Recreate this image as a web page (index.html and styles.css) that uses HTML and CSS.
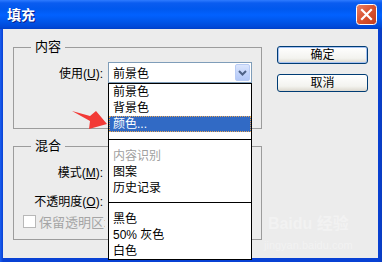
FILE: index.html
```html
<!DOCTYPE html>
<html lang="zh-CN">
<head>
    <meta charset="UTF-8">
    <title>填充</title>
    <link rel="stylesheet" href="styles.css">
</head>
<body>
    <div class="window">
        <header class="titlebar">
            <span class="title">填充</span>
            <button class="close-button" aria-label="关闭">
                <svg viewBox="0 0 21 21" width="21" height="21">
                    <defs>
                        <linearGradient id="closeFill" x1="0" y1="0" x2="1" y2="1">
                            <stop offset="0" stop-color="#E9836A"/>
                            <stop offset="0.5" stop-color="#D9522F"/>
                            <stop offset="1" stop-color="#C23C1C"/>
                        </linearGradient>
                    </defs>
                    <rect x="0.5" y="0.5" width="20" height="20" rx="3" fill="url(#closeFill)" stroke="#FFFFFF"/>
                    <path d="M6 6 L15 15 M15 6 L6 15" stroke="#FFFFFF" stroke-width="2.2" stroke-linecap="square"/>
                </svg>
            </button>
        </header>

        <div class="client">
            <div class="groups">
                <fieldset class="group group-content">
                    <legend>内容</legend>
                    <div class="field-row">
                        <label class="field-label">使用(<u>U</u>):</label>
                        <div class="combo">
                            <span class="combo-value">前景色</span>
                            <span class="combo-button">
                                <svg viewBox="0 0 9 6" width="9" height="6">
                                    <path d="M1 1 L4.5 4.5 L8 1" fill="none" stroke="#4D6185" stroke-width="2"/>
                                </svg>
                            </span>
                            <ul class="combo-list">
                                <li class="combo-item">前景色</li>
                                <li class="combo-item">背景色</li>
                                <li class="combo-item selected">颜色...</li>
                                <li class="combo-sep sep-first"></li>
                                <li class="combo-item disabled">内容识别</li>
                                <li class="combo-item">图案</li>
                                <li class="combo-item">历史记录</li>
                                <li class="combo-sep sep-second"></li>
                                <li class="combo-item">黑色</li>
                                <li class="combo-item">50% 灰色</li>
                                <li class="combo-item">白色</li>
                            </ul>
                        </div>
                    </div>
                </fieldset>

                <fieldset class="group group-blend">
                    <legend>混合</legend>
                    <div class="field-row">
                        <label class="field-label">模式(<u>M</u>):</label>
                    </div>
                    <div class="field-row">
                        <label class="field-label">不透明度(<u>O</u>):</label>
                    </div>
                    <div class="check-row">
                        <span class="checkbox"></span>
                        <span class="check-label">保留透明区域</span>
                    </div>
                </fieldset>
            </div>

            <div class="buttons">
                <button class="dialog-button default">确定</button>
                <button class="dialog-button">取消</button>
            </div>
        </div>

        <svg class="pointer-arrow" viewBox="0 0 40 26" width="40" height="26">
            <polygon points="2,3 20,8 26,3 37,16 19,21 20,13" fill="#F23A36"/>
        </svg>

        <div class="watermark">
            <div class="watermark-logo">Baidu 经验</div>
            <div class="watermark-url">jingyan.baidu.com</div>
        </div>
    </div>
</body>
</html>
```

FILE: styles.css
```css
* {
    margin: 0;
    padding: 0;
    box-sizing: border-box;
}

body {
    width: 382px;
    height: 262px;
    overflow: hidden;
    font-family: "Liberation Sans", "Noto Sans CJK SC", sans-serif;
    font-size: 12px;
    color: #000000;
    background: #0841D4;
}

.window {
    position: relative;
    width: 382px;
    height: 262px;
    display: flex;
    flex-direction: column;
    background: linear-gradient(to right, #1B5EF0 0, #0841D4 3px, #0841D4 378px, #0A3CC0 382px);
}

.titlebar {
    height: 29px;
    display: flex;
    align-items: center;
    padding: 0 5px 0 7px;
    background: linear-gradient(to bottom, #2E7BFF 0, #0A5CF0 3px, #0058EE 9px, #0261FF 15px, #0055E8 22px, #0048D8 27px, #0040C6 29px);
}

.title {
    color: #FFFFFF;
    font-size: 14px;
    font-weight: bold;
    line-height: 16px;
    text-shadow: 1px 1px 0 #0A1E8A;
}

.close-button {
    margin-left: auto;
    width: 21px;
    height: 21px;
    border: none;
    background: transparent;
    display: flex;
}

.client {
    flex: 1;
    display: flex;
    margin: 0 4px 4px 3px;
    padding: 10px 10px 0 10px;
    background: #ECECEC;
}

.groups {
    width: 249px;
    display: flex;
    flex-direction: column;
    gap: 9px;
}

.group {
    border: 1px solid #9C9C9C;
    padding: 0;
    margin: 0;
}

.group legend {
    margin-left: 17px;
    padding: 0 4px;
    font-size: 13px;
    line-height: 16px;
}

.group-content {
    height: 90px;
}

.group-blend {
    height: 102px;
}

.field-row {
    display: flex;
    align-items: center;
    height: 21px;
    margin-top: 7px;
}

.group-blend .field-row + .field-row {
    margin-top: 8px;
}

.field-label {
    flex: none;
    width: 89px;
    margin-right: 5px;
    text-align: right;
    white-space: nowrap;
}

.combo {
    position: relative;
    width: 144px;
    height: 21px;
    display: flex;
    align-items: center;
    border: 1px solid #7F9DB9;
    background: #FFFFFF;
}

.combo-value {
    padding-left: 4px;
}

.combo-button {
    margin-left: auto;
    margin-right: 1px;
    width: 15px;
    height: 17px;
    display: flex;
    align-items: center;
    justify-content: center;
    border-radius: 2px;
    background: linear-gradient(to bottom, #DCE6FD, #C0D2FA 60%, #B3C8F7);
    border: 1px solid #B9CCF5;
}

.combo-list {
    position: absolute;
    left: -1px;
    top: 20px;
    width: 144px;
    list-style: none;
    border: 1px solid #000000;
    background: #FFFFFF;
    z-index: 10;
}

.combo-item {
    height: 16px;
    line-height: 16px;
    padding-left: 4px;
    white-space: nowrap;
}

.combo-item.selected {
    background: #316AC5;
    color: #FFFFFF;
    outline: 1px dotted #E8A858;
    outline-offset: -1px;
}

.combo-item.disabled {
    color: #A0A0A0;
}

.combo-sep {
    height: 1px;
    background: #000000;
}

.sep-first {
    margin: 7px 0 8px;
}

.sep-second {
    margin: 6px 0 8px;
}

.check-row {
    display: flex;
    align-items: center;
    margin: 1px 0 0 9px;
}

.checkbox {
    flex: none;
    width: 13px;
    height: 13px;
    border: 1px solid #B8B8B8;
    background: #FFFFFF;
}

/* the open list covers the end of this label */
.check-label {
    width: 66px;
    overflow: hidden;
    margin-left: 3px;
    font-size: 13px;
    color: #A5A5A5;
    white-space: nowrap;
}

.buttons {
    margin: 7px 0 0 15px;
    display: flex;
    flex-direction: column;
    gap: 10px;
}

.dialog-button {
    width: 91px;
    height: 18px;
    border: 1px solid #003C74;
    border-radius: 3px;
    background: linear-gradient(to bottom, #FFFFFF, #F3F3EF 70%, #DCD8CE);
    font-family: inherit;
    font-size: 12px;
    line-height: 14px;
    color: #000000;
}

.dialog-button.default {
    box-shadow: inset 0 0 0 1px #A6C2F2;
}

.pointer-arrow {
    position: absolute;
    left: 70px;
    top: 108px;
}

.watermark {
    position: absolute;
    left: 264px;
    top: 214px;
    color: rgba(255, 255, 255, 0.35);
    text-align: center;
}

.watermark-logo {
    font-size: 16px;
    font-weight: bold;
    line-height: 20px;
}

.watermark-url {
    margin-top: 5px;
    font-size: 11px;
    line-height: 13px;
}
```
